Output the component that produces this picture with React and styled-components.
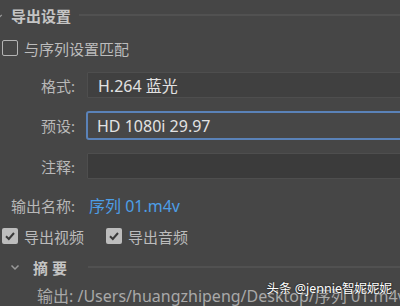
import React from 'react';
import styled, { createGlobalStyle } from 'styled-components';

const GlobalStyle = createGlobalStyle`
    html, body {
        margin: 0;
        padding: 0;
        background: #464646;
        overflow: hidden;
    }
    * { box-sizing: border-box; }
`;

const Panel = styled.div`
    position: relative;
    width: 400px;
    height: 306px;
    overflow: hidden;
    background: #464646;
    color: #bdbdbd;
    font-family: "Noto Sans", "Noto Sans CJK SC", sans-serif;
`;

const Content = styled.div`
    width: 430px;
    display: flex;
    flex-direction: column;
`;

const SectionHeader = styled.div`
    display: flex;
    align-items: center;
    gap: ${p => p.gap || 6}px;
    height: ${p => p.h}px;
    padding-left: ${p => p.indent}px;
`;

const Title = styled.span`
    font-size: 15px;
    font-weight: 700;
    color: #c4c4c4;
    letter-spacing: ${p => p.spread ? '4px' : '0'};
    margin-right: ${p => p.spread ? '4px' : '0'};
    white-space: nowrap;
`;

const Rule = styled.div`
    flex: 1;
    height: 2px;
    margin-top: ${p => p.offset || 0}px;
    background: #515151;
`;

const Chevron = styled.svg`
    flex: none;
    margin-left: ${p => p.ml || 0}px;
`;

const CheckRow = styled.div`
    display: flex;
    align-items: center;
    gap: 22px;
    height: ${p => p.h}px;
    padding-left: 2px;
`;

const CheckItem = styled.label`
    display: flex;
    align-items: center;
    gap: 6px;
    font-size: 15px;
    color: #bcbcbc;
`;

const Box = styled.span`
    width: 16px;
    height: 16px;
    border-radius: 2px;
    border: ${p => p.checked ? 'none' : '1.5px solid #b4b4b4'};
    background: ${p => p.checked ? '#bdbdbd' : 'transparent'};
    display: flex;
    align-items: center;
    justify-content: center;
`;

const FieldRow = styled.div`
    display: grid;
    grid-template-columns: 75px 1fr;
    column-gap: 12px;
    align-items: center;
    height: ${p => p.h}px;
`;

const Label = styled.span`
    text-align: right;
    font-size: 15px;
    color: #b8b8b8;
    white-space: nowrap;
`;

const Field = styled.div`
    height: ${p => p.active ? 29 : 26}px;
    margin-left: ${p => p.active ? -1 : 0}px;
    display: flex;
    align-items: center;
    padding-left: ${p => p.active ? 9 : 10}px;
    font-size: 16px;
    color: #e2e2e2;
    background: ${p => p.bg};
    border: ${p => p.active ? '2px solid #5a82b8' : '1px solid #4e4e4e'};
    border-radius: ${p => p.active ? '3px' : '1px'};
    white-space: nowrap;
`;

const LinkValue = styled.span`
    font-size: 16px;
    color: #4d9ee6;
    padding-left: 2px;
`;

const Summary = styled.div`
    padding-left: 37px;
    font-size: 16px;
    color: #a9a9a9;
    white-space: nowrap;
    height: 20px;
    line-height: 20px;
`;

const Watermark = styled.div`
    position: absolute;
    right: 8px;
    bottom: 9px;
    font-size: 12.5px;
    color: #ffffff;
    text-shadow: 0 0 2px rgba(0, 0, 0, 0.8);
    white-space: nowrap;
`;

const ChevronDown = ({ ml, size = 10 }) => (
    <Chevron ml={ml} width={size} height={size} viewBox="0 0 10 10">
        <path d="M1.5 3.5 L5 7 L8.5 3.5" fill="none" stroke="#9a9a9a" strokeWidth="1.5" />
    </Chevron>
);

const Check = ({ checked, label }) => (
    <CheckItem>
        <Box checked={checked}>
            {checked && (
                <svg width="12" height="12" viewBox="0 0 12 12">
                    <path d="M2 6.2 L4.8 9 L10 3" fill="none" stroke="#3a3a3a" strokeWidth="2" />
                </svg>
            )}
        </Box>
        {label}
    </CheckItem>
);

const App = () => {
    return (
        <Panel>
            <GlobalStyle />
            <Content>
                <SectionHeader h={31} gap={8}>
                    <ChevronDown ml={-5} size={8} />
                    <Title>导出设置</Title>
                    <Rule offset={-2} />
                </SectionHeader>
                <CheckRow h={34}>
                    <Check label="与序列设置匹配" />
                </CheckRow>
                <FieldRow h={40}>
                    <Label>格式:</Label>
                    <Field bg="#404040">H.264 蓝光</Field>
                </FieldRow>
                <FieldRow h={41}>
                    <Label>预设:</Label>
                    <Field active bg="#474747">HD 1080i 29.97</Field>
                </FieldRow>
                <FieldRow h={40}>
                    <Label>注释:</Label>
                    <Field bg="#3b3b3b" />
                </FieldRow>
                <FieldRow h={38}>
                    <Label>输出名称:</Label>
                    <LinkValue>序列 01.m4v</LinkValue>
                </FieldRow>
                <CheckRow h={24}>
                    <Check checked label="导出视频" />
                    <Check checked label="导出音频" />
                </CheckRow>
                <SectionHeader h={38} gap={13} indent={10}>
                    <ChevronDown />
                    <Title spread>摘要</Title>
                    <Rule />
                </SectionHeader>
                <Summary>输出: /Users/huangzhipeng/Desktop/序列 01.m4v</Summary>
            </Content>
            <Watermark>头条 @jennie智妮妮妮</Watermark>
        </Panel>
    );
};

export default App;
